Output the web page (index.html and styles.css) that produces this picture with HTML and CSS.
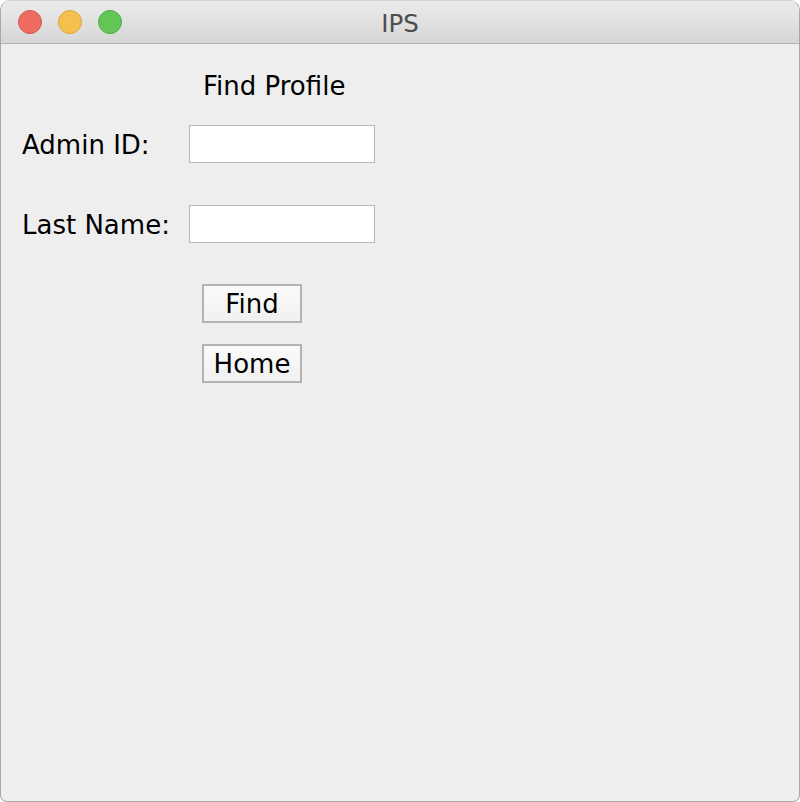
FILE: index.html
```html
<!DOCTYPE html>
<html>
<head>
<meta charset="utf-8">
<title>IPS</title>
<link rel="stylesheet" href="styles.css">
</head>
<body>
<div class="window">
  <div class="titlebar">
    <div class="lights">
      <span class="light red"></span>
      <span class="light yellow"></span>
      <span class="light green"></span>
    </div>
    <div class="title">IPS</div>
  </div>
  <div class="content">
    <div class="heading">Find Profile</div>
    <div class="row row-admin">
      <label class="label">Admin ID:</label>
      <div class="field"></div>
    </div>
    <div class="row row-last">
      <label class="label">Last Name:</label>
      <div class="field"></div>
    </div>
    <div class="buttons">
      <div class="btn">Find</div>
      <div class="btn">Home</div>
    </div>
  </div>
</div>
</body>
</html>
```
FILE: styles.css
```css
html, body {
  margin: 0;
  padding: 0;
  background: #ffffff;
}
body {
  width: 800px;
  height: 802px;
  overflow: hidden;
  font-family: "DejaVu Sans", "Noto Sans", sans-serif;
}
.window {
  box-sizing: border-box;
  width: 800px;
  height: 802px;
  border: 1px solid #a8a8a8;
  border-top-color: #d0d0d0;
  border-radius: 10px 10px 7px 7px;
  background: #eeeeee;
  overflow: hidden;
  display: flex;
  flex-direction: column;
}
.titlebar {
  position: relative;
  height: 42px;
  flex: none;
  background: linear-gradient(#ebebeb, #d6d6d6);
  border-bottom: 1px solid #b2b2b2;
  display: flex;
  align-items: center;
}
.lights {
  display: flex;
  gap: 16px;
  padding-left: 17px;
}
.light {
  box-sizing: border-box;
  width: 24px;
  height: 24px;
  border-radius: 50%;
  border: 1px solid;
}
.red { background: #ee6b60; border-color: #d25a4f; }
.yellow { background: #f6c04f; border-color: #d9a33f; }
.green { background: #61c655; border-color: #50aa45; }
.title {
  position: absolute;
  left: 0;
  right: 0;
  top: 0;
  height: 42px;
  line-height: 42px;
  padding-top: 2px;
  text-align: center;
  font-size: 24.5px;
  color: #4d4d4d;
}
.content {
  display: flex;
  flex-direction: column;
  padding-left: 21px;
  padding-top: 27px;
  font-size: 26px;
  color: #000;
}
.heading {
  line-height: 30px;
  padding-left: 181px;
}
.row {
  display: flex;
  align-items: center;
  height: 38px;
}
.row-admin { margin-top: 24px; }
.row-last { margin-top: 42px; }
.label {
  width: 167px;
  line-height: 30px;
  padding-top: 2px;
}
.field {
  box-sizing: border-box;
  width: 186px;
  height: 38px;
  background: #ffffff;
  border: 1px solid #b8b8b8;
}
.buttons {
  display: flex;
  flex-direction: column;
  gap: 21px;
  margin-top: 41px;
  padding-left: 180px;
}
.btn {
  box-sizing: border-box;
  width: 100px;
  height: 39px;
  border: 2px solid #b3b3b3;
  background: linear-gradient(#fbfbfb, #f0f0f0);
  text-align: center;
  line-height: 35px;
  padding-top: 1px;
}
```
